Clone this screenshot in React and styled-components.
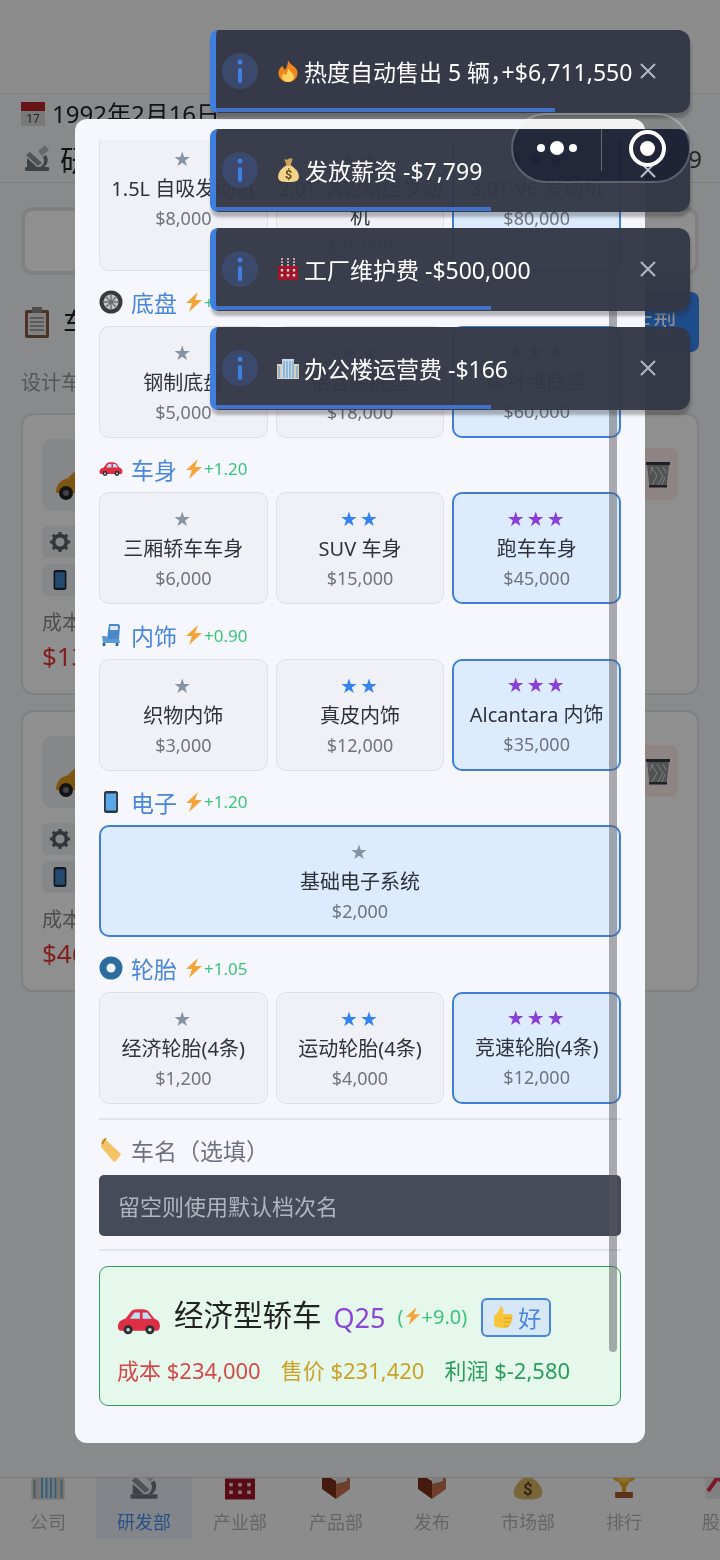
import React from 'react';
import styled, { createGlobalStyle } from 'styled-components';

const FONT = `"Noto Sans", "Noto Sans CJK SC", sans-serif`;

const GlobalStyle = createGlobalStyle`
  html, body { margin: 0; padding: 0; background: #8a8a8c; }
  * { box-sizing: border-box; }
  body { font-family: ${FONT}; }
`;

/* drawn emoji */
const Calendar = ({ size = 26 }) => (
  <svg width={size} height={size} viewBox="0 0 26 26">
    <rect x="1" y="1" width="24" height="24" fill="#d8d8d8" />
    <rect x="1" y="1" width="24" height="9" fill="#b8242c" />
    <text x="13" y="22" fontSize="12" textAnchor="middle" fill="#444" fontFamily="Roboto">17</text>
  </svg>
);
const Microscope = ({ size = 30 }) => (
  <svg width={size} height={size} viewBox="0 0 30 30">
    <rect x="3" y="24" width="24" height="4" rx="1" fill="#6d767e" />
    <path d="M5 15l10 9H5z" fill="#6d767e" />
    <path d="M4 12l4-3 12 11-4 3z" fill="#8c969e" />
    <path d="M16 8l7-6 4 5-7 6z" fill="#b5bcc2" />
    <path d="M24 12c3 4 2 9-2 12h-4c4-2 5-6 3-10z" fill="#6d767e" />
  </svg>
);
const Clipboard = ({ size = 32 }) => (
  <svg width={size} height={size} viewBox="0 0 32 32">
    <rect x="4" y="4" width="24" height="28" rx="2" fill="#8a5a44" />
    <rect x="7" y="7" width="18" height="22" fill="#e8e8e8" />
    <rect x="11" y="1" width="10" height="6" rx="1" fill="#888" />
    <path d="M9 12h14M9 16h14M9 20h14M9 24h14" stroke="#888" strokeWidth="1.4" />
  </svg>
);
const OrangeCar = () => (
  <svg width="60" height="44" viewBox="0 0 60 44">
    <path d="M2 36c0-8 4-13 12-15l12-12c10-4 24-4 32 0v27z" fill="#e09a20" />
    <path d="M26 14h32v22H26z" fill="#3f7fae" />
    <circle cx="12" cy="36" r="7" fill="#222" />
    <circle cx="12" cy="36" r="3" fill="#777" />
  </svg>
);
const Gear = ({ size = 22 }) => (
  <svg width={size} height={size} viewBox="0 0 24 24">
    <circle cx="12" cy="12" r="7" fill="none" stroke="#5a6068" strokeWidth="4" />
    <path d="M12 1v5M12 18v5M1 12h5M18 12h5M4.2 4.2l3.5 3.5M16.3 16.3l3.5 3.5M4.2 19.8l3.5-3.5M16.3 7.7l3.5-3.5" stroke="#5a6068" strokeWidth="3.4" />
  </svg>
);
const Phone = ({ size = 22, fill = '#3f85c4', edge = '#1f2933' }) => (
  <svg width={size} height={size} viewBox="0 0 24 24">
    <rect x="5" y="1" width="14" height="22" rx="2.5" fill={edge} />
    <rect x="6.8" y="3.5" width="10.4" height="17" fill={fill} />
  </svg>
);
const Trash = () => (
  <svg width="26" height="30" viewBox="0 0 26 30">
    <path d="M2 6h22l-2.5 22h-17z" fill="#8f9396" />
    <path d="M6 8l6 9-5 9M12 8l6 9-5 9M18 8l3 6M8 8l-3 7M20 18l-3 8" stroke="#e2e4e5" strokeWidth="1" fill="none" />
    <rect x="1" y="3" width="24" height="3" fill="#383c40" />
    <rect x="4" y="26" width="18" height="2.5" fill="#383c40" />
  </svg>
);
const Fire = ({ size = 24 }) => (
  <svg width={size} height={size} viewBox="0 0 24 24">
    <path d="M12 1c1 4 6 5 9 10 2 6-2 12-9 12S1 17 3 11c1-2 2-3 3-4 1 1 2 2 3 4 2-3 3-6 3-10z" fill="#f0861c" />
    <path d="M12 9c1 3 6 5 6 9 0 3-3 5-6 5s-6-2-6-5c0-2 1-3 2-4 0 1 1 2 2 2 1-2 2-4 2-7z" fill="#fcd15d" />
  </svg>
);
const MoneyBag = ({ size = 24, dim }) => (
  <svg width={size} height={size} viewBox="0 0 24 24">
    <path d="M8 1c2 1 3 1 4 0s3-1 4 0l-2 6h-4z" fill="#cfa35a" />
    <path d="M10 7h4c5 3 8 7 8 11 0 4-3 5-10 5S2 22 2 18c0-4 3-8 8-11z" fill={dim ? '#d9b566' : '#f3d48a'} />
    <text x="12" y="20" fontSize="12" textAnchor="middle" fill="#5d4a20" fontWeight="700" fontFamily="Roboto">$</text>
  </svg>
);
const Factory = ({ size = 24 }) => (
  <svg width={size} height={size} viewBox="0 0 24 24">
    <rect x="2" y="9" width="20" height="14" fill="#a3162a" />
    <path d="M6 1v8M12 1v8M18 1v8" stroke="#c9a0a6" strokeWidth="2" strokeDasharray="2 1" />
    <path d="M2 14h20" stroke="#7a0f1e" strokeWidth="1" />
    <path d="M6 12v8M12 12v8M18 12v8" stroke="#f0d8da" strokeWidth="2.4" strokeDasharray="2.4 2.6" />
  </svg>
);
const Office = ({ size = 24 }) => (
  <svg width={size} height={size} viewBox="0 0 24 24">
    <rect x="1" y="8" width="22" height="15" fill="#d9cfc0" />
    <rect x="6" y="3" width="12" height="20" fill="#c7dbea" />
    <path d="M8 5v17M11 5v17M14 5v17M17 5v17M3 10v12M21 10v12" stroke="#6aa0c4" strokeWidth="1.2" />
  </svg>
);
const Box = ({ size = 34 }) => (
  <svg width={size} height={size} viewBox="0 0 34 34">
    <path d="M3 6l14 8v18L3 22z" fill="#7c2e14" />
    <path d="M31 6l-14 8v18l14-10z" fill="#c8714d" />
    <path d="M18 2l10 3v9l-11 3z" fill="#dfe4e8" />
  </svg>
);
const Trophy = ({ size = 34 }) => (
  <svg width={size} height={size} viewBox="0 0 34 34">
    <path d="M4 3h26c0 8-3 11-8 12-1 3-2 4-3 5v5h-4v-5c-1-1-2-2-3-5C7 14 4 11 4 3z" fill="#e5a823" />
    <path d="M9 6h16c0 6-2 9-8 10-6-1-8-4-8-10z" fill="#f6c445" />
    <rect x="8" y="25" width="18" height="6" rx="1" fill="#a65b33" />
  </svg>
);
const Chart = ({ size = 34 }) => (
  <svg width={size} height={size} viewBox="0 0 34 34">
    <rect x="2" y="2" width="30" height="30" rx="2" fill="#e4e7ea" />
    <path d="M5 24l10-14 6 7 8-10" fill="none" stroke="#dd2e44" strokeWidth="4" />
  </svg>
);
const Tire = ({ size = 24 }) => (
  <svg width={size} height={size} viewBox="0 0 24 24">
    <circle cx="12" cy="12" r="11.5" fill="#3a3a3c" />
    <circle cx="12" cy="12" r="7.5" fill="#bfc2c6" />
    <path d="M12 5v14M5 12h14M7 7l10 10M7 17L17 7" stroke="#6b6e72" strokeWidth="1.4" />
    <circle cx="12" cy="12" r="2" fill="#6b6e72" />
  </svg>
);
const RedCar = ({ width = 24 }) => (
  <svg width={width} height={width * 0.62} viewBox="0 0 48 30">
    <path d="M1 24c-1-6 2-10 8-11l7-9c2-2 14-2 18 0l7 9c4 1 6 4 6 8 0 3-1 5-3 5H3z" fill="#dd2e44" />
    <path d="M14 13l5-7h6v7zM28 6h5l5 7H28z" fill="#bbddf5" />
    <circle cx="12" cy="25" r="5" fill="#292f33" />
    <circle cx="12" cy="25" r="2" fill="#ccd6dd" />
    <circle cx="36" cy="25" r="5" fill="#292f33" />
    <circle cx="36" cy="25" r="2" fill="#ccd6dd" />
  </svg>
);
const Seat = ({ size = 26 }) => (
  <svg width={size} height={size} viewBox="0 0 24 24">
    <path d="M10 1h9c1 0 2 1 2 2l-1 13H8z" fill="#4a8ac4" />
    <rect x="11" y="3" width="8" height="4" rx="1" fill="#dbe8f3" />
    <path d="M3 13h4l2 3h11l1 4H4z" fill="#5b9bd5" />
    <path d="M5 20v3M18 20v3" stroke="#2f5f8a" strokeWidth="2.6" />
  </svg>
);
const Ring = ({ size = 24 }) => (
  <svg width={size} height={size} viewBox="0 0 24 24">
    <circle cx="12" cy="12" r="11.5" fill="#2d6c9e" />
    <circle cx="12" cy="12" r="4.5" fill="#f2f6fb" />
  </svg>
);
const Bolt = ({ size = 20 }) => (
  <svg width={size} height={size} viewBox="0 0 20 20">
    <path d="M14 0L2 11h6l-3 9 13-12h-7z" fill="#f4a53a" />
  </svg>
);
const Tag = ({ size = 24 }) => (
  <svg width={size} height={size} viewBox="0 0 24 24">
    <path d="M3 1l3 0 15 14c1 1 1 2 0 3l-4 5c-1 1-2 1-3 0L2 9z" fill="#f3c365" />
    <path d="M3 6L7 0" stroke="#b5762f" strokeWidth="1.4" />
  </svg>
);
const Thumb = ({ size = 24 }) => (
  <svg width={size} height={size} viewBox="0 0 24 24">
    <path d="M3 11c3-2 5-5 6-9 3-1 4 2 3 7h7c3 0 3 3 2 4 1 2 0 3-1 4 0 2-1 3-2 4-1 2-3 2-6 2-4 0-6-1-9-2z" fill="#f9c63b" />
    <path d="M13 13h8M13 17h7M13 21h5" stroke="#d99b26" strokeWidth="1.2" />
  </svg>
);
const InfoGlyph = () => (
  <svg width="8" height="24" viewBox="0 0 8 24">
    <circle cx="4" cy="3" r="2.5" fill="#3f7fe0" />
    <rect x="2" y="9" width="4" height="15" rx="2" fill="#3f7fe0" />
  </svg>
);
const CloseGlyph = () => (
  <svg width="16" height="16" viewBox="0 0 16 16">
    <path d="M1.5 1.5l13 13M14.5 1.5l-13 13" stroke="#b4b7c0" strokeWidth="2" strokeLinecap="round" />
  </svg>
);

/* page behind the dialog */
const Stage = styled.div`
  position: relative;
  width: 720px;
  height: 1560px;
  overflow: hidden;
  background: #f5f6f8;
  font-family: ${FONT};
`;
const Page = styled.div`
  display: flex;
  flex-direction: column;
  height: 100%;
`;
const TopSpace = styled.div`
  height: 94px;
  background: #fafafa;
  border-bottom: 1px solid #e8e8e8;
`;
const DateBar = styled.div`
  height: 36px;
  padding: 4px 20px 0;
  display: flex;
  align-items: center;
  font-size: 24px;
  color: #222;
`;
const DateText = styled.div`
  display: flex;
  align-items: center;
  gap: 6px;
`;
const DateLabel = styled.span`
  margin-top: -4px;
`;
const TitleBar = styled.div`
  height: 53px;
  padding: 4px 22px 0;
  display: flex;
  align-items: center;
  justify-content: space-between;
  font-size: 30px;
  color: #222;
  border-bottom: 1px solid #dcdcdc;
`;
const TitleLeft = styled.div`
  display: flex;
  align-items: center;
  gap: 8px;
`;
const TitleRight = styled.span`
  font-size: 24px;
  margin-right: -4px;
  color: #444;
`;
const Body = styled.div`
  padding: 24px 21px 0;
  flex: 1;
`;
const SearchCard = styled.div`
  height: 68px;
  border: 4px solid #e4e4e4;
  border-radius: 12px;
  background: #fff;
`;
const SectionHead = styled.div`
  margin-top: 17px;
  height: 60px;
  display: flex;
  align-items: center;
  justify-content: space-between;
  font-size: 28px;
  color: #222;
`;
const SectionTitle = styled.div`
  display: flex;
  align-items: center;
  gap: 10px;
`;
const AddButton = styled.div`
  width: 150px;
  height: 60px;
  background: #3687f5;
  border-radius: 8px;
  color: #fff;
  font-size: 24px;
  display: flex;
  align-items: center;
  justify-content: flex-end;
  padding-right: 22px;
`;
const Hint = styled.div`
  margin-top: 15px;
  font-size: 20px;
  color: #9a9a9a;
`;
const DesignCards = styled.div`
  margin-top: 17px;
  display: flex;
  flex-direction: column;
  gap: 15px;
`;
const DesignCard = styled.div`
  height: 282px;
  border: 2px solid #e4e4e4;
  border-radius: 12px;
  background: #fff;
  padding: 24px 19px;
  position: relative;
`;
const Thumbnail = styled.div`
  width: 110px;
  height: 72px;
  background: #eef0f3;
  border-radius: 10px;
  display: flex;
  align-items: flex-end;
  padding: 0 0 10px 12px;
`;
const Chip = styled.div`
  margin-top: ${p => p.$top}px;
  width: 140px;
  height: 32px;
  background: #eef0f3;
  border-radius: 6px;
  display: flex;
  align-items: center;
  padding-left: 7px;
`;
const CostLabel = styled.div`
  margin-top: 11px;
  font-size: 20px;
  color: #8a8a8a;
`;
const CostValue = styled.div`
  margin-top: 2px;
  font-size: 26px;
  color: #e53935;
`;
const TrashButton = styled.div`
  position: absolute;
  right: 19px;
  top: 33px;
  width: 40px;
  height: 52px;
  background: #ffecec;
  border-radius: 8px;
  display: flex;
  align-items: center;
  justify-content: center;
`;
const TabBar = styled.div`
  height: 83px;
  display: flex;
  border-top: 1px solid #d6d6d8;
  overflow: hidden;
  background: #fafafa;
`;
const Tab = styled.div`
  flex: 0 0 96px;
  height: 61px;
  display: flex;
  flex-direction: column;
  align-items: center;
  font-size: 18px;
  line-height: 24px;
  color: ${p => (p.$active ? '#4a90f0' : '#b4b4b4')};
  background: ${p => (p.$active ? '#e8edf6' : 'transparent')};
`;
const TabIcon = styled.div`
  height: 23px;
  margin-bottom: 9px;
  display: flex;
  align-items: flex-end;
  justify-content: center;
  overflow: hidden;
  flex: none;
`;
const Scrim = styled.div`
  position: absolute;
  inset: 0;
  background: rgba(0, 0, 0, 0.44);
`;

/* dialog */
const Modal = styled.div`
  position: absolute;
  left: 75px;
  top: 119px;
  width: 570px;
  height: 1324px;
  background: #f6f7fc;
  border-radius: 12px;
  padding: 21px 24px 37px;
  display: flex;
  flex-direction: column;
`;
const Scroller = styled.div`
  position: relative;
  flex: 1;
  overflow: hidden;
`;
const ScrollThumb = styled.div`
  position: absolute;
  right: 4px;
  top: 100px;
  bottom: 54px;
  width: 8px;
  border-radius: 4px;
  background: rgba(90, 90, 95, 0.5);
`;
const Section = styled.div`
  margin-bottom: 20px;
`;
const TopSection = styled(Section)`
  margin-top: -8px;
  & > div > div { min-height: 139px; }
`;
const PartLabel = styled.div`
  height: 24px;
  padding-bottom: 2px;
  margin-bottom: 10.5px;
  display: flex;
  align-items: center;
  gap: 8px;
  font-size: 23px;
  color: #4a86dc;
`;
const LabelIcon = styled.span`
  width: 24px;
  display: flex;
  justify-content: center;
  flex: none;
`;
const Bonus = styled.span`
  display: flex;
  align-items: center;
  font-size: 17px;
  color: #3cc47c;
  margin-left: -1px;
`;
const Options = styled.div`
  display: grid;
  grid-template-columns: ${p => (p.$single ? '1fr' : 'repeat(3, 1fr)')};
  gap: 8px;
`;
const Option = styled.div`
  min-height: 112px;
  padding: ${p => (p.$selected ? '13.5px 0 0' : '15px 0 0')};
  display: flex;
  flex-direction: column;
  align-items: center;
  text-align: center;
  border-radius: 10px;
  background: ${p => (p.$selected ? '#dcecfe' : '#f0f1f7')};
  border: ${p => (p.$selected ? '2.5px solid #3f7fd8' : '1px solid #dedfe7')};
`;
const Stars = styled.div`
  font-size: 20px;
  line-height: 22px;
  letter-spacing: 2px;
  color: ${p => ({ 1: '#8593a3', 2: '#3584ee', 3: '#8a3fd6' }[p.$level])};
  font-family: "DejaVu Sans", sans-serif;
`;
const OptionName = styled.div`
  margin-top: 5px;
  font-size: 20px;
  line-height: 28px;
  color: #2f323a;
`;
const OptionPrice = styled.div`
  margin-top: 1px;
  font-size: 18px;
  line-height: 28px;
  color: #70747e;
`;
const Divider = styled.div`
  height: 2px;
  background: #e3e4eb;
  margin: ${p => p.$margin};
`;
const NameLabel = styled(PartLabel)`
  color: #6d7280;
  margin-bottom: 12px;
`;
const NameInput = styled.input`
  display: block;
  width: 100%;
  height: 61px;
  background: #464b5a;
  border: none;
  border-radius: 5px;
  padding: 0 19px;
  font-family: ${FONT};
  font-size: 22px;
  color: #fff;
  &::placeholder { color: #b2b5be; opacity: 1; }
`;
const Summary = styled.div`
  height: 140px;
  border: 1.5px solid #2e9e5b;
  border-radius: 9px;
  background: #e6f8ec;
  padding: 30px 17px 0;
`;
const SummaryTop = styled.div`
  display: flex;
  align-items: center;
  height: 40px;
`;
const CarSlot = styled.span`
  display: flex;
  margin: 8px 13px 0 0;
`;
const CarName = styled.span`
  font-size: 29.5px;
  line-height: 36px;
  margin-top: -4px;
  color: #222;
`;
const Grade = styled.span`
  margin-left: 12px;
  font-size: 27px;
  color: #8a46d8;
`;
const Power = styled.span`
  margin-left: 12px;
  display: flex;
  align-items: center;
  font-size: 20px;
  color: #3cc47c;
  margin-top: -2px;
`;
const Rating = styled.span`
  margin-left: 14px;
  width: 70px;
  height: 39px;
  flex: none;
  display: flex;
  align-items: center;
  justify-content: center;
  gap: 3px;
  border: 2px solid #4a86dc;
  border-radius: 6px;
  background: #d6e8f6;
  color: #4a86dc;
  font-size: 23px;
`;
const Money = styled.div`
  margin-top: 18px;
  display: flex;
  gap: 20px;
  font-size: 22px;
  line-height: 30px;
`;
const MoneyItem = styled.span`
  color: ${p => p.$color};
`;

/* toasts and capsule */
const ToastStack = styled.div`
  position: absolute;
  left: 210px;
  top: 30px;
  width: 480px;
  display: flex;
  flex-direction: column;
  gap: 16px;
`;
const Toast = styled.div`
  position: relative;
  height: 83px;
  background: rgba(52, 56, 70, 0.97);
  border-left: 6px solid #3f7fe0;
  border-radius: 8px 12px 12px 8px;
  box-shadow: 1px 5px 3px rgba(40, 40, 45, 0.32);
  display: flex;
  align-items: center;
  padding: 0 0 1px 6px;
  color: #fff;
  font-size: 23px;
  font-feature-settings: "halt";
`;
const InfoDot = styled.div`
  width: 36px;
  height: 36px;
  border-radius: 50%;
  background: #3b4a6c;
  display: flex;
  align-items: center;
  justify-content: center;
  margin-right: 18px;
  flex: none;
`;
const ToastText = styled.div`
  flex: 1;
  min-width: 0;
  display: flex;
  align-items: center;
  gap: 4px;
  white-space: nowrap;
`;
const ToastClose = styled.div`
  flex: none;
  width: 16px;
  margin-right: 34px;
  display: flex;
`;
const Progress = styled.div`
  position: absolute;
  left: 0;
  bottom: 1px;
  height: 4px;
  background: #3f72c8;
`;
const Capsule = styled.div`
  position: absolute;
  left: 511px;
  top: 113px;
  width: 180px;
  height: 70px;
  border-radius: 35px;
  border: 2px solid rgba(255, 255, 255, 0.28);
  backdrop-filter: contrast(1.3) brightness(0.95);
  display: flex;
  align-items: center;
`;
const CapsuleSide = styled.div`
  flex: 1;
  height: 100%;
  display: flex;
  align-items: center;
  justify-content: center;
  gap: 5px;
`;
const CapsuleRule = styled.div`
  width: 1px;
  height: 46px;
  background: rgba(255, 255, 255, 0.3);
`;
const Dot = styled.span`
  width: ${p => p.$size}px;
  height: ${p => p.$size}px;
  border-radius: 50%;
  background: #fff;
`;
const Target = styled.div`
  width: 37px;
  height: 37px;
  margin-left: 5px;
  border-radius: 50%;
  border: 4px solid #fff;
  display: flex;
  align-items: center;
  justify-content: center;
  &::after {
    content: '';
    width: 15px;
    height: 15px;
    border-radius: 50%;
    background: #fff;
  }
`;

const parts = [
  {
    label: '底盘', icon: <Tire />, bonus: '+1.05',
    items: [
      ['钢制底盘', '$5,000', 1],
      ['铝合金底盘', '$18,000', 2],
      ['碳纤维底盘', '$60,000', 3, true],
    ],
  },
  {
    label: '车身', icon: <RedCar />, bonus: '+1.20',
    items: [
      ['三厢轿车车身', '$6,000', 1],
      ['SUV 车身', '$15,000', 2],
      ['跑车车身', '$45,000', 3, true],
    ],
  },
  {
    label: '内饰', icon: <Seat />, bonus: '+0.90',
    items: [
      ['织物内饰', '$3,000', 1],
      ['真皮内饰', '$12,000', 2],
      ['Alcantara 内饰', '$35,000', 3, true],
    ],
  },
  {
    label: '电子', icon: <Phone size={26} fill="#5aa9e6" edge="#2c3640" />, bonus: '+1.20', single: true,
    items: [['基础电子系统', '$2,000', 1, true]],
  },
  {
    label: '轮胎', icon: <Ring />, bonus: '+1.05',
    items: [
      ['经济轮胎(4条)', '$1,200', 1],
      ['运动轮胎(4条)', '$4,000', 2],
      ['竞速轮胎(4条)', '$12,000', 3, true],
    ],
  },
];

const engines = [
  ['1.5L 自吸发动机', '$8,000', 1],
  ['2.0T 涡轮增压发动机', '$25,000', 2],
  ['3.0T V6 发动机', '$80,000', 3, true],
];

const toasts = [
  { icon: <Fire />, text: '热度自动售出 5 辆，+$6,711,550', width: 339 },
  { icon: <MoneyBag size={25} />, text: '发放薪资 -$7,799', width: 275 },
  { icon: <Factory />, text: '工厂维护费 -$500,000', width: 275 },
  { icon: <Office />, text: '办公楼运营费 -$166', width: 275 },
];

const tabs = [
  { name: '公司', icon: <Office size={36} /> },
  { name: '研发部', icon: <Microscope size={34} />, active: true },
  { name: '产业部', icon: <Factory size={36} /> },
  { name: '产品部', icon: <Box /> },
  { name: '发布', icon: <Box /> },
  { name: '市场部', icon: <MoneyBag size={34} dim /> },
  { name: '排行', icon: <Trophy /> },
  { name: '股市', icon: <Chart /> },
];

const OptionGrid = ({ items, single }) => (
  <Options $single={single}>
    {items.map(([name, price, level, selected]) => (
      <Option key={name} $selected={selected}>
        <Stars $level={level}>{'★'.repeat(level)}</Stars>
        <OptionName>{name}</OptionName>
        <OptionPrice>{price}</OptionPrice>
      </Option>
    ))}
  </Options>
);

const SavedDesign = ({ cost }) => (
  <DesignCard>
    <Thumbnail><OrangeCar /></Thumbnail>
    <Chip $top={15}><Gear /></Chip>
    <Chip $top={6}><Phone /></Chip>
    <CostLabel>成本</CostLabel>
    <CostValue>{cost}</CostValue>
    <TrashButton><Trash /></TrashButton>
  </DesignCard>
);

export default function App() {
  return (
    <>
      <GlobalStyle />
      <Stage>
        <Page>
          <TopSpace />
          <DateBar>
            <DateText><Calendar /><DateLabel>1992年2月16日</DateLabel></DateText>
          </DateBar>
          <TitleBar>
            <TitleLeft><Microscope />研发部</TitleLeft>
            <TitleRight>9</TitleRight>
          </TitleBar>
          <Body>
            <SearchCard />
            <SectionHead>
              <SectionTitle><Clipboard />车型设计</SectionTitle>
              <AddButton>新车型</AddButton>
            </SectionHead>
            <Hint>设计车型</Hint>
            <DesignCards>
              <SavedDesign cost="$134,000" />
              <SavedDesign cost="$460,000" />
            </DesignCards>
          </Body>
          <TabBar>
            {tabs.map(t => (
              <Tab key={t.name} $active={t.active}>
                <TabIcon>{t.icon}</TabIcon>
                {t.name}
              </Tab>
            ))}
          </TabBar>
        </Page>
        <Scrim />
        <Modal>
          <Scroller>
            <TopSection><OptionGrid items={engines} /></TopSection>
            {parts.map(p => (
              <Section key={p.label}>
                <PartLabel>
                  <LabelIcon>{p.icon}</LabelIcon>
                  {p.label}
                  <Bonus><Bolt />{p.bonus}</Bonus>
                </PartLabel>
                <OptionGrid items={p.items} single={p.single} />
              </Section>
            ))}
            <Divider $margin="-5.5px 0 19px" />
            <NameLabel><LabelIcon><Tag /></LabelIcon>车名（选填）</NameLabel>
            <NameInput placeholder="留空则使用默认档次名" />
            <Divider $margin="13px 0 15px" />
            <Summary>
              <SummaryTop>
                <CarSlot><RedCar width={44} /></CarSlot>
                <CarName>经济型轿车</CarName>
                <Grade>Q25</Grade>
                <Power>(<Bolt size={18} />+9.0)</Power>
                <Rating><Thumb />好</Rating>
              </SummaryTop>
              <Money>
                <MoneyItem $color="#d24a4a">成本 $234,000</MoneyItem>
                <MoneyItem $color="#c9a227">售价 $231,420</MoneyItem>
                <MoneyItem $color="#2a9d5c">利润 $-2,580</MoneyItem>
              </Money>
            </Summary>
            <ScrollThumb />
          </Scroller>
        </Modal>
        <ToastStack>
          {toasts.map(t => (
            <Toast key={t.text}>
              <InfoDot><InfoGlyph /></InfoDot>
              <ToastText>{t.icon}{t.text}</ToastText>
              <ToastClose><CloseGlyph /></ToastClose>
              <Progress style={{ width: t.width }} />
            </Toast>
          ))}
        </ToastStack>
        <Capsule>
          <CapsuleSide>
            <Dot $size={8} /><Dot $size={14} /><Dot $size={8} />
          </CapsuleSide>
          <CapsuleRule />
          <CapsuleSide><Target /></CapsuleSide>
        </Capsule>
      </Stage>
    </>
  );
}
